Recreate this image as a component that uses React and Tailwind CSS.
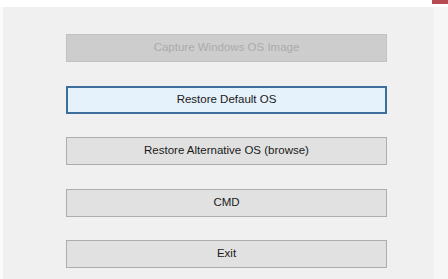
import React from "react";

const buttons = [
  { label: "Capture Windows OS Image", kind: "disabled" },
  { label: "Restore Default OS", kind: "focused" },
  { label: "Restore Alternative OS (browse)", kind: "normal" },
  { label: "CMD", kind: "normal" },
  { label: "Exit", kind: "normal" },
];

function WinButton({ label, kind }) {
  if (kind === "disabled") {
    return (
      <button disabled className="h-[28px] w-full bg-[#cdcdcd] border border-[#c2c2c2] text-[#ababab] text-[11.5px]">
        {label}
      </button>
    );
  }
  if (kind === "focused") {
    return (
      <button className="h-[28px] w-full bg-[#e5f1fb] border-2 border-[#3c6e9e] text-[#1a1a1a] text-[11.5px]">
        {label}
      </button>
    );
  }
  return (
    <button className="h-[28px] w-full bg-[#e1e1e1] border border-[#adadad] text-[#1a1a1a] text-[11.5px]">
      {label}
    </button>
  );
}

export default function App() {
  return (
    <div className="w-[448px] h-[279px] bg-white overflow-hidden flex flex-col" style={{ fontFamily: '"Liberation Sans", Arial, sans-serif' }}>
      {/* title bar, mostly cropped */}
      <div className="h-[7px] flex items-end justify-between overflow-hidden">
        <div className="pl-[6px] text-[12px] leading-none text-[#666] translate-y-[-8px]">
          Windows OS Recovery Tool
        </div>
        <div className="w-[16px] h-[4px] self-start bg-[#b54a52]" />
      </div>

      {/* client area */}
      <div className="flex-1 flex">
        <div className="w-[3px] bg-[#fafafa]" />
        <div className="w-[431px] bg-[#f0f0f0] flex flex-col gap-[23.5px] pt-[27px] pl-[63px] pr-[47px]">
          {buttons.map(b => (
            <WinButton key={b.label} label={b.label} kind={b.kind} />
          ))}
        </div>
        <div className="flex-1 bg-[#f6f6f6]" />
      </div>
    </div>
  );
}
